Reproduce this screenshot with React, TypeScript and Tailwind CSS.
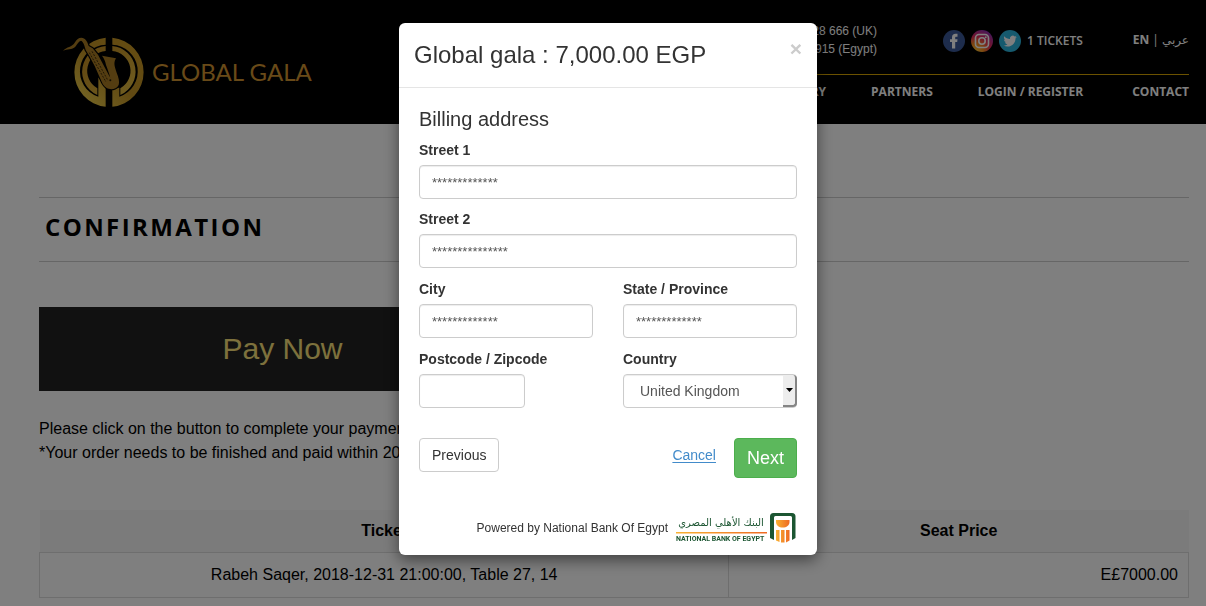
import { useState } from "react";

const navItems = ["GALLERY", "PARTNERS", "LOGIN / REGISTER"];

const inputClass =
  "h-[34px] w-full rounded border border-[#cccccc] bg-white px-3 text-[13px] text-[#555555] shadow-[inset_0_1px_1px_rgba(0,0,0,0.075)]";

function GalaLogo() {
  return (
    <a href="#" className="flex items-center gap-2" aria-label="Global Gala">
      <svg width="82" height="72" viewBox="66 50 246 216" fill="none">
        <defs>
          <linearGradient id="gold" x1="107" y1="262" x2="300" y2="60" gradientUnits="userSpaceOnUse">
            <stop offset="0" stopColor="#f2d650" />
            <stop offset="0.5" stopColor="#c29326" />
            <stop offset="1" stopColor="#cc9a24" />
          </linearGradient>
          <linearGradient id="goldLight" x1="150" y1="80" x2="280" y2="240" gradientUnits="userSpaceOnUse">
            <stop offset="0" stopColor="#c08a20" />
            <stop offset="1" stopColor="#e2be44" />
          </linearGradient>
        </defs>
        <path d="M197 55A104 104 0 0 0 197 262V175H175V232A80 80 0 0 1 197 76Z" fill="url(#gold)" />
        <path d="M217 55A104 104 0 0 1 217 262V205H238V232A80 80 0 0 0 217 76Z" fill="url(#gold)" />
        <path d="M197 80A77 77 0 0 0 172 227V207A60 60 0 0 1 197 95Z" fill="url(#goldLight)" />
        <path d="M217 80A77 77 0 0 1 241 227V207A60 60 0 0 0 217 95Z" fill="url(#goldLight)" />
        <path
          d="M69 94C80 82 96 83 104 70C110 60 116 55 124 55C136 55 142 66 146 80L158 87L174 106L206 166C208 170 210 172 211 177C207 160 202 148 198 137C196 124 192 118 186 109L228 117L225 123C221 134 225 145 230 160C236 175 239 187 236 197C229 211 211 212 200 206C190 200 186 190 181 178L164 140L148 110L137 92C134 80 131 68 123 64C116 65 112 74 106 82C97 92 80 88 69 94Z"
          fill="#a87a22"
          stroke="#000"
          strokeWidth="7"
          strokeLinejoin="round"
          paintOrder="stroke"
        />
        <path d="M156 96L204 184M148 100L198 188" stroke="#2a1d06" strokeWidth="2.5" strokeDasharray="6 4" />
        <circle cx="211" cy="183" r="3" fill="#2a1d06" />
      </svg>
      <span className="font-['Lato'] text-2xl whitespace-nowrap text-[#d29430]">GLOBAL GALA</span>
    </a>
  );
}

function SocialLinks() {
  return (
    <div className="flex gap-1.5">
      <a href="#" aria-label="Facebook">
        <svg width="22" height="22" viewBox="0 0 22 22">
          <circle cx="11" cy="11" r="11" fill="#3b5998" />
          <path d="M9 18.500V12H7V9.200H9V7.600C9 5 10.400 3.800 12.500 3.800H14.500V6.700H13.200C12.400 6.700 12.200 7.100 12.200 7.700V9.200H14.500L14.200 12H12.200V18.500Z" fill="#fff" />
        </svg>
      </a>
      <a href="#" aria-label="Instagram">
        <svg width="22" height="22" viewBox="0 0 22 22" fill="none">
          <defs>
            <radialGradient id="insta" cx="0.2" cy="1" r="1.1">
              <stop offset="0" stopColor="#ffd03c" />
              <stop offset="0.35" stopColor="#fa8a20" />
              <stop offset="0.65" stopColor="#e42a5c" />
              <stop offset="1" stopColor="#8a30b8" />
            </radialGradient>
          </defs>
          <circle cx="11" cy="11" r="11" fill="url(#insta)" />
          <rect x="4.5" y="4.5" width="13" height="13" rx="3.5" stroke="#fff" strokeWidth="1.6" />
          <circle cx="11" cy="11" r="3.2" stroke="#fff" strokeWidth="1.6" />
          <circle cx="14.8" cy="7.2" r="0.9" fill="#fff" />
        </svg>
      </a>
      <a href="#" aria-label="Twitter">
        <svg width="22" height="22" viewBox="0 0 22 22">
          <circle cx="11" cy="11" r="11" fill="#2cb4dc" />
          <g transform="translate(4.4 4.4) scale(0.56)">
            <path
              d="M23.95 4.57a10 10 0 0 1-2.82.77 4.96 4.96 0 0 0 2.16-2.72c-.95.55-2 .95-3.13 1.18a4.92 4.92 0 0 0-8.38 4.48C7.69 8.1 4.07 6.13 1.64 3.16a4.82 4.82 0 0 0-.67 2.48c0 1.71.87 3.21 2.19 4.1a4.9 4.9 0 0 1-2.23-.62v.06a4.92 4.92 0 0 0 3.95 4.83 5 5 0 0 1-2.21.08 4.94 4.94 0 0 0 4.6 3.42A9.87 9.87 0 0 1 0 19.54a14 14 0 0 0 7.55 2.21c9.05 0 14-7.5 14-13.98 0-.21 0-.42-.02-.63a9.94 9.94 0 0 0 2.42-2.57Z"
              fill="#fff"
            />
          </g>
        </svg>
      </a>
    </div>
  );
}

function BankLogo() {
  return (
    <svg width="120" height="30" viewBox="0 0 120 30" role="img" aria-label="National Bank of Egypt">
      <defs>
        <linearGradient id="sun" x1="0" y1="0" x2="1" y2="0">
          <stop offset="0" stopColor="#f9b233" />
          <stop offset="1" stopColor="#ee6a23" />
        </linearGradient>
      </defs>
      <text x="45" y="13" textAnchor="middle" direction="rtl" className="font-['DejaVu_Sans'] text-[10px]" fill="#1c5632">
        البنك الأهلي المصري
      </text>
      <rect x="0" y="19" width="91" height="1.5" fill="url(#sun)" />
      <text x="0" y="28" className="font-['Roboto'] text-[7px] font-bold" fill="#1c5632">
        NATIONAL BANK OF EGYPT
      </text>
      <path d="M94 25V3.500Q94 0 97.500 0H116Q119.500 0 119.500 3.500V25L116 27V4.500Q116 3 114.500 3H99.500Q98 3 98 4.500V27Z" fill="#1c5632" />
      <path d="M100 7H113.500V9C113.500 12.500 110.500 14.500 106.700 14.500C103 14.500 100 12.500 100 9Z" fill="url(#sun)" />
      <path d="M100 17H103.500V29L100 27.500ZM105 17H108.500V29.500H105ZM110 17H113.500V27.500L110 29.500Z" fill="url(#sun)" />
    </svg>
  );
}

function Header() {
  return (
    <header className="flex justify-between bg-black pt-[22px] pr-[17px] pb-4 pl-[62px] font-['Open_Sans'] text-xs text-white">
      <div className="pt-[14px]">
        <GalaLogo />
      </div>
      <div className="w-1/2">
        <div className="flex h-[53px] items-start justify-end border-b border-[#d7a400]">
          <div className="pr-[66px] text-right font-['Liberation_Sans'] leading-[18px]">
            <p>28 666 (UK)</p>
            <p>915 (Egypt)</p>
          </div>
          <div className="flex h-[38px] items-center font-semibold">
            <SocialLinks />
            <a href="#" className="ml-1.5">1 TICKETS</a>
          </div>
          <div className="ml-[50px] flex h-9 items-center gap-[3px]">
            <a href="#" className="font-bold">EN</a>
            <span>|</span>
            <a href="#" lang="ar" className="font-['DejaVu_Sans']">عربي</a>
          </div>
        </div>
        <nav className="flex justify-end gap-[45px] pt-2 leading-[18px] font-bold">
          {navItems.map((item) => (
            <a key={item} href="#">{item}</a>
          ))}
          <a href="#" className="pl-1">CONTACT</a>
        </nav>
      </div>
    </header>
  );
}

function Field({ id, label, value, className }: { id: string; label: string; value: string; className?: string }) {
  return (
    <div>
      <label htmlFor={id} className="mb-[5px] block leading-5 font-bold">{label}</label>
      <input id={id} defaultValue={value} className={`${inputClass} ${className ?? ""}`} />
    </div>
  );
}

function BillingModal({ onClose }: { onClose: () => void }) {
  return (
    <div className="fixed inset-0 flex items-start justify-center overflow-hidden bg-black/50 pt-[23px] pl-2.5">
      <div
        role="dialog"
        aria-labelledby="modal-title"
        className="w-full max-w-[418px] rounded-md bg-white text-sm text-[#333333] shadow-[0_5px_15px_rgba(0,0,0,0.5)]"
      >
        <div className="flex items-start justify-between border-b border-[#e5e5e5] p-[15px]">
          <h4 id="modal-title" className="text-2xl leading-[34px]">Global gala : 7,000.00 EGP</h4>
          <button type="button" onClick={onClose} aria-label="Close" className="text-[21px] leading-[22px] font-bold text-[#cccccc]">
            ×
          </button>
        </div>
        <form className="px-5 pt-5 pb-3" onSubmit={(e) => e.preventDefault()}>
          <h5 className="mb-2.5 text-xl leading-[22px]">Billing address</h5>
          <div className="flex flex-col gap-2.5">
            <Field id="street1" label="Street 1" value="*************" />
            <Field id="street2" label="Street 2" value="***************" />
            <div className="grid grid-cols-2 gap-x-[30px] gap-y-[11px] pt-px">
              <Field id="city" label="City" value="*************" />
              <Field id="state" label="State / Province" value="*************" />
              <Field id="postcode" label="Postcode / Zipcode" value="" className="max-w-[106px]" />
              <div>
                <label htmlFor="country" className="mb-[5px] block leading-5 font-bold">Country</label>
                <div className="relative">
                  <select
                    id="country"
                    className="h-[34px] w-full appearance-none rounded border border-[#cccccc] bg-white pl-4 text-sm text-[#555555] shadow-[inset_0_1px_1px_rgba(0,0,0,0.075)]"
                  >
                    <option>United Kingdom</option>
                  </select>
                  <span className="pointer-events-none absolute inset-y-px right-0 flex w-[14px] items-center justify-center rounded-r-sm border-r-2 border-b-2 border-[#858585] bg-[#ededed]">
                    <svg width="7" height="4" viewBox="0 0 7 4">
                      <path d="M0 0H7L3.5 4Z" fill="#000" />
                    </svg>
                  </span>
                </div>
              </div>
            </div>
          </div>
          <div className="mt-[30px] flex items-start justify-between">
            <button type="button" className="h-[34px] rounded border border-[#cccccc] bg-white px-3">Previous</button>
            <div className="flex items-start gap-[18px]">
              <a href="#" className="leading-[34px] text-[#428bca] underline underline-offset-2">Cancel</a>
              <button type="submit" className="h-10 rounded border border-[#4cae4c] bg-[#5cb85c] px-3 text-lg text-white">Next</button>
            </div>
          </div>
          <div className="mt-[35px] flex items-center justify-end gap-2 pr-px text-xs">
            <span>Powered by National Bank Of Egypt</span>
            <BankLogo />
          </div>
        </form>
      </div>
    </div>
  );
}

export default function App() {
  const [open, setOpen] = useState(true);

  return (
    <div className="min-h-screen bg-white font-['Liberation_Sans',sans-serif] text-black">
      <Header />
      <main className="pt-[73px] pr-[17px] pl-[39px]">
        <h1 className="border-y border-[#cccccc] px-1.5 pt-[11px] pb-4 font-['Open_Sans'] text-2xl leading-9 font-bold tracking-widest">
          CONFIRMATION
        </h1>
        <button
          type="button"
          onClick={() => setOpen(true)}
          className="mt-[45px] h-[84px] w-full max-w-[487px] bg-[#222222] text-3xl text-[#fbe27a]"
        >
          Pay Now
        </button>
        <div className="mt-[26px] leading-6">
          <p>Please click on the button to complete your payment.</p>
          <p>*Your order needs to be finished and paid within 20 minutes.</p>
        </div>
        <table className="mt-[45px] w-full border-collapse leading-6">
          <thead>
            <tr className="bg-[#f7f7f7]">
              <th className="w-3/5 px-2.5 py-[9px]">Ticket</th>
              <th className="px-2.5 py-[9px]">Seat Price</th>
            </tr>
          </thead>
          <tbody>
            <tr>
              <td className="border border-[#dddddd] px-2.5 py-[10px] text-center">Rabeh Saqer, 2018-12-31 21:00:00, Table 27, 14</td>
              <td className="border border-[#dddddd] px-2.5 py-[10px] text-right">E£7000.00</td>
            </tr>
          </tbody>
        </table>
      </main>
      {open && <BillingModal onClose={() => setOpen(false)} />}
    </div>
  );
}
